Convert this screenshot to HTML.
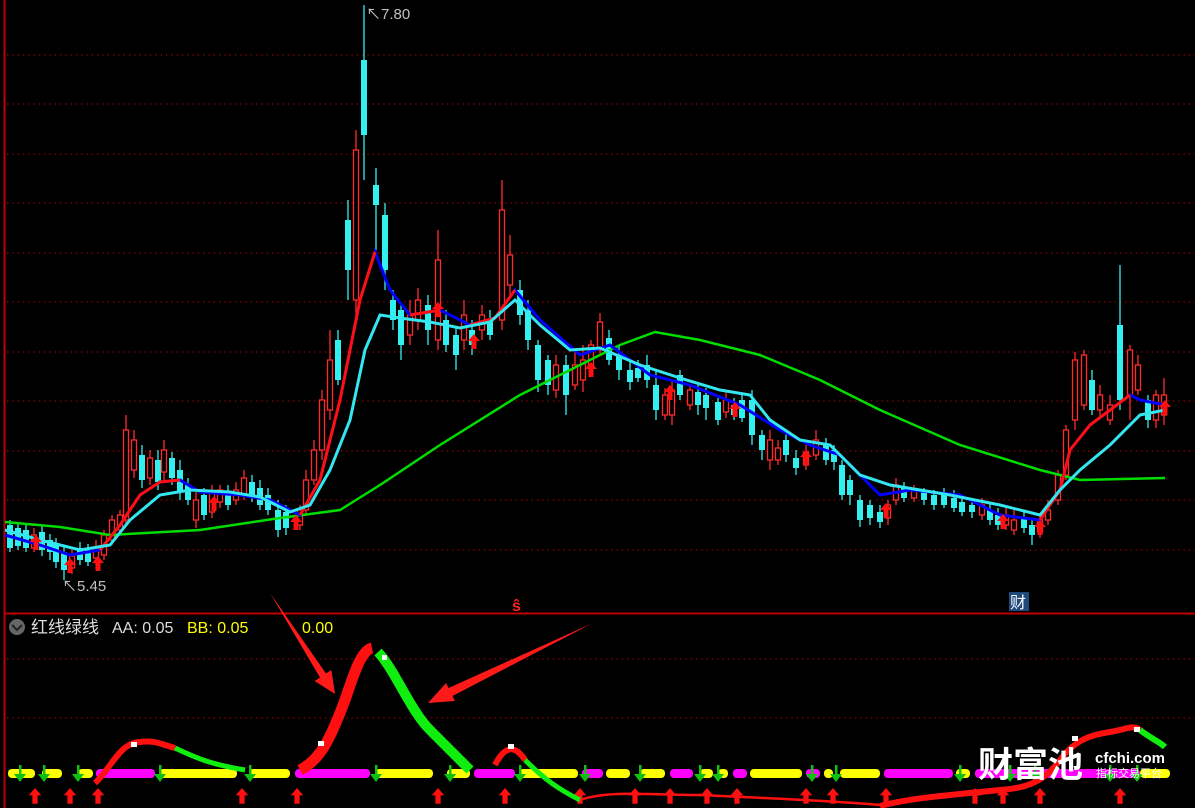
<!DOCTYPE html>
<html><head><meta charset="utf-8"><style>
html,body{margin:0;padding:0;background:#000;width:1195px;height:808px;overflow:hidden}
svg{position:absolute;left:0;top:0}
</style></head><body>
<svg id="s" width="1195" height="808" viewBox="0 0 1195 808" xmlns="http://www.w3.org/2000/svg" font-family="Liberation Sans, Noto Sans CJK SC, sans-serif">
<rect width="1195" height="808" fill="#000"/>
<line x1="4.5" y1="0" x2="4.5" y2="808" stroke="#c00000" stroke-width="2"/>
<line x1="4" y1="613.5" x2="1195" y2="613.5" stroke="#c00000" stroke-width="2"/>
<g stroke="#a00000" stroke-width="1.3" stroke-dasharray="1.3 4">
<line x1="7" y1="55" x2="1195" y2="55"/><line x1="7" y1="104" x2="1195" y2="104"/><line x1="7" y1="154" x2="1195" y2="154"/><line x1="7" y1="203" x2="1195" y2="203"/><line x1="7" y1="253" x2="1195" y2="253"/><line x1="7" y1="302" x2="1195" y2="302"/><line x1="7" y1="352" x2="1195" y2="352"/><line x1="7" y1="401" x2="1195" y2="401"/><line x1="7" y1="451" x2="1195" y2="451"/><line x1="7" y1="500" x2="1195" y2="500"/><line x1="7" y1="550" x2="1195" y2="550"/>
<line x1="7" y1="659" x2="1195" y2="659"/><line x1="7" y1="718" x2="1195" y2="718"/>
</g>
<g id="candles"></g>
<polyline fill="none" stroke="#00dd00" stroke-width="2.5" points="5,522 60,527 110,535 200,530 280,518 340,510 380,485 440,445 520,395 580,365 620,345 655,332 700,340 760,355 820,380 880,410 960,445 1040,470 1080,480 1165,478"/>
<polyline fill="none" stroke="#0000ff" stroke-width="3" points="5,535 40,545 70,555 100,550 120,525 140,495 160,482 180,480 200,492 240,495 270,500 300,515 320,480 340,400 360,300 375,252 390,290 410,315 440,310 470,325 495,318 515,290 540,320 580,355 610,345 650,375 690,385 740,405 780,430 810,445 840,455 880,495 910,490 960,495 1000,515 1040,520 1060,490 1070,450 1090,425 1130,395 1140,400 1165,405"/>
<polyline fill="none" stroke="#ff1010" stroke-width="3" points="100,550 120,525 140,495 160,482 180,480"/>
<polyline fill="none" stroke="#ff1010" stroke-width="3" points="300,515 320,480 340,400 360,300 375,252"/>
<polyline fill="none" stroke="#ff1010" stroke-width="3" points="410,315 440,310"/>
<polyline fill="none" stroke="#ff1010" stroke-width="3" points="470,325 495,318 515,290"/>
<polyline fill="none" stroke="#ff1010" stroke-width="3" points="1040,520 1060,490 1070,450 1090,425 1130,395"/>
<polyline fill="none" stroke="#33e6f0" stroke-width="3" points="5,530 40,540 80,550 110,545 130,520 160,495 190,490 230,492 260,497 290,512 310,505 330,470 350,420 365,350 380,315 400,318 430,322 460,328 490,322 515,300 540,325 570,350 600,348 640,365 680,378 720,390 750,395 770,420 800,440 830,445 860,475 890,485 950,495 1000,505 1040,515 1060,490 1080,470 1110,445 1140,415 1165,410"/>
<g id="uparr"></g>
<text x="366" y="19" fill="#c0c0c0" font-size="15">↖7.80</text>
<text x="62" y="591" fill="#c0c0c0" font-size="15">↖5.45</text>
<text x="512" y="611" fill="#ff2020" font-size="16" font-weight="bold">ŝ</text>
<rect x="1009" y="592" width="20" height="19" fill="#1d4a7a"/>
<text x="1010" y="608" fill="#fff" font-size="16">财</text>
<circle cx="17" cy="627" r="8" fill="#666"/><path d="M12 625 L17 630 L22 625" stroke="#222" stroke-width="2" fill="none"/>
<text x="31" y="633" fill="#ddd" font-size="17">红线绿线</text>
<text x="112" y="633" fill="#ddd" font-size="16">AA: 0.05</text>
<text x="187" y="633" fill="#ffff00" font-size="16">BB: 0.05</text>
<text x="302" y="633" fill="#ffff00" font-size="16">0.00</text>
<g id="bars"></g>
<path d="M95,783 C110,770 120,742 140,742 C155,740 160,744 175,748" stroke="#ff1010" stroke-width="6" fill="none"/>
<path d="M175,748 C200,760 215,765 245,770" stroke="#10ee10" stroke-width="5" fill="none"/>
<path d="M300,770 C320,760 330,740 345,700 C355,670 362,650 372,648" stroke="#ff1010" stroke-width="11" fill="none"/>
<path d="M378,652 C395,670 410,710 430,730 C445,745 455,755 470,770" stroke="#10ee10" stroke-width="10" fill="none"/>
<path d="M495,765 C505,745 515,745 525,760" stroke="#ff1010" stroke-width="6" fill="none"/>
<path d="M525,760 C545,780 560,790 580,800" stroke="#10ee10" stroke-width="5" fill="none"/>
<path d="M580,800 C610,790 650,795 700,795 C760,798 820,800 880,805" stroke="#ff1010" stroke-width="2.5" fill="none"/>
<path d="M880,806 C910,798 950,795 1000,790 C1030,788 1045,780 1060,760 C1075,740 1090,735 1110,732 C1125,730 1132,724 1140,730" stroke="#ff1010" stroke-width="6" fill="none"/>
<path d="M1140,730 C1150,738 1160,742 1165,747" stroke="#10ee10" stroke-width="6" fill="none"/>
<g fill="#fff"><rect x="131" y="742" width="6" height="5"/><rect x="318" y="741" width="6" height="5"/><rect x="508" y="744" width="6" height="5"/><rect x="1072" y="736" width="6" height="5"/><rect x="1134" y="727" width="6" height="5"/><rect x="382" y="655" width="5" height="5"/></g>
<polygon points="270,593 326,673.5 331.4,670 335,694 314.6,681 320,677.5" fill="#ff1a1a"/>
<polygon points="593,623 452.5,696 454.9,701 428,703 446.1,683 448.5,688" fill="#ff1a1a"/>
<text x="978" y="777" fill="#fff" font-size="35" font-weight="bold">财富池</text>
<text x="1095" y="763" fill="#fff" font-size="15" font-weight="bold">cfchi.com</text>
<text x="1096" y="777" fill="#fff" font-size="11">指标交易平台</text>
</svg>
<script>
var ns="http://www.w3.org/2000/svg";
function el(p,t,a){var e=document.createElementNS(ns,t);for(var k in a)e.setAttribute(k,a[k]);p.appendChild(e);return e;}
var C=document.getElementById('candles');
var d=[[10,525,548,520,552,'c'],[18,528,546,522,550,'c'],[26,530,548,524,552,'c'],[34,535,548,528,552,'r'],[42,532,550,526,556,'c'],[50,540,552,534,560,'c'],[56,545,562,538,568,'c'],[64,552,570,545,580,'c'],[72,556,568,550,574,'r'],[80,548,560,542,565,'c'],[88,550,562,544,566,'c'],[96,548,558,540,562,'r'],[104,535,555,530,560,'r'],[112,520,540,515,545,'r'],[120,515,530,510,535,'r'],[126,430,520,415,525,'r'],[134,440,470,430,478,'r'],[142,455,480,445,488,'c'],[150,458,478,450,485,'r'],[158,460,482,450,490,'c'],[164,450,472,440,480,'r'],[172,458,478,452,485,'c'],[180,470,492,460,500,'c'],[188,485,500,478,505,'c'],[196,500,520,492,528,'r'],[204,495,515,488,520,'c'],[212,492,512,485,518,'r'],[220,490,502,485,508,'r'],[228,492,505,485,510,'c'],[236,490,500,482,505,'r'],[244,478,495,470,500,'r'],[252,482,497,475,502,'c'],[260,488,505,480,510,'c'],[268,495,510,488,515,'c'],[278,510,530,500,537,'c'],[286,512,528,505,535,'c'],[300,510,525,505,530,'r'],[306,480,510,470,515,'r'],[314,450,480,440,485,'r'],[322,400,450,390,460,'r'],[330,360,410,330,420,'r'],[338,340,380,330,385,'c'],[348,220,270,200,300,'c'],[356,150,300,130,320,'r'],[364,60,135,5,180,'c'],[376,185,205,168,250,'c'],[385,215,270,203,290,'c'],[393,300,320,290,330,'c'],[401,310,345,305,360,'c'],[410,315,335,300,345,'r'],[418,300,320,288,330,'r'],[428,305,330,295,345,'c'],[438,260,340,230,350,'r'],[446,320,345,310,352,'c'],[456,335,355,328,370,'c'],[464,315,340,300,350,'r'],[472,330,345,320,355,'c'],[482,315,330,305,340,'r'],[490,320,335,310,340,'c'],[502,210,320,180,330,'r'],[510,255,285,235,295,'r'],[520,290,315,280,325,'c'],[528,310,340,300,350,'c'],[538,345,380,340,392,'c'],[548,360,385,355,395,'c'],[556,365,390,355,398,'r'],[566,365,395,355,415,'c'],[575,365,385,350,390,'r'],[583,360,380,345,392,'r'],[591,345,368,340,372,'r'],[600,322,350,313,355,'r'],[609,338,360,330,365,'c'],[619,355,370,345,380,'c'],[630,370,382,360,390,'c'],[638,368,378,360,382,'c'],[647,365,380,355,388,'c'],[656,385,410,370,420,'c'],[665,395,415,388,420,'r'],[672,390,415,380,425,'r'],[680,375,395,370,400,'c'],[690,390,405,385,410,'r'],[698,392,405,385,415,'c'],[706,395,408,388,420,'c'],[718,402,420,398,425,'c'],[726,400,412,390,418,'r'],[734,405,415,398,420,'c'],[742,400,418,393,422,'c'],[752,400,435,390,445,'c'],[762,435,450,430,460,'c'],[770,440,460,430,470,'r'],[778,448,460,440,465,'r'],[786,440,455,432,462,'c'],[796,458,468,450,475,'c'],[806,452,465,445,470,'r'],[816,440,455,430,460,'r'],[826,445,460,438,465,'c'],[834,450,462,445,470,'c'],[842,465,495,460,500,'c'],[850,480,495,475,505,'c'],[860,500,520,495,527,'c'],[870,505,518,500,525,'c'],[880,512,522,505,528,'c'],[888,505,518,500,525,'r'],[896,485,500,478,505,'r'],[904,488,498,482,502,'c'],[914,490,498,485,502,'r'],[924,492,500,488,505,'c'],[934,495,505,490,510,'c'],[944,495,505,488,508,'c'],[954,498,508,490,512,'c'],[962,502,512,495,516,'c'],[972,505,512,500,518,'c'],[982,505,515,498,520,'r'],[990,510,520,503,525,'c'],[998,515,525,508,530,'c'],[1006,515,525,508,530,'r'],[1014,520,530,510,535,'r'],[1024,518,528,510,533,'c'],[1032,525,535,518,545,'c'],[1040,520,532,515,538,'r'],[1048,510,520,500,525,'r'],[1058,475,500,470,505,'r'],[1066,430,475,425,480,'r'],[1075,360,420,352,430,'r'],[1084,355,405,350,410,'r'],[1092,380,410,370,415,'c'],[1100,395,410,385,418,'r'],[1110,405,420,395,425,'r'],[1120,325,400,265,410,'c'],[1130,350,395,345,420,'r'],[1138,365,390,355,395,'r'],[1148,400,420,395,428,'c'],[1156,395,420,390,428,'r'],[1164,395,415,378,425,'r']];
d.forEach(function(c){var x=c[0],col=c[5]=='r'?'#ff2a2a':'#33f0f0';
el(C,'line',{x1:x,x2:x,y1:c[3],y2:c[4],stroke:col,'stroke-width':1.3});
if(c[5]=='r')el(C,'rect',{x:x-2.5,y:c[1],width:5,height:c[2]-c[1],fill:'#000',stroke:col,'stroke-width':1.3});
else el(C,'rect',{x:x-3,y:c[1],width:6,height:c[2]-c[1],fill:col});});
var U=document.getElementById('uparr');
function arrow(p,x,y,s){el(p,'path',{d:'M'+x+','+y+' l'+(-6*s)+','+(7*s)+' h'+(3.5*s)+' v'+(8*s)+' h'+(5*s)+' v'+(-8*s)+' h'+(3.5*s)+' z',fill:'#ff1010'});}
[[36,535],[70,558],[98,556],[214,496],[296,515],[438,302],[474,334],[591,362],[670,385],[735,402],[806,450],[886,503],[1003,514],[1040,520],[1165,400]].forEach(function(a){arrow(U,a[0],a[1],1)});
var B=document.getElementById('bars');
[[8,35,'#ffff00'],[42,62,'#ffff00'],[78,93,'#ffff00'],[96,155,'#ff00ff'],[159,237,'#ffff00'],[249,290,'#ffff00'],[295,370,'#ff00ff'],[375,433,'#ffff00'],[447,470,'#ffff00'],[474,515,'#ff00ff'],[519,578,'#ffff00'],[582,603,'#ff00ff'],[606,630,'#ffff00'],[640,665,'#ffff00'],[670,693,'#ff00ff'],[700,713,'#ffff00'],[718,728,'#ffff00'],[733,747,'#ff00ff'],[750,802,'#ffff00'],[806,820,'#ff00ff'],[824,833,'#ffff00'],[840,880,'#ffff00'],[884,953,'#ff00ff'],[956,970,'#ffff00'],[975,1140,'#ff00ff'],[1140,1170,'#ffff00']].forEach(function(b){el(B,'rect',{x:b[0],y:769,width:b[1]-b[0],height:9,rx:4,fill:b[2]});});
[20,44,78,160,250,376,450,520,585,640,700,718,812,836,960,1010,1035,1110,1137].forEach(function(x){el(B,'path',{d:'M'+(x-6)+',774 h12 l-6,8 z M'+(x-1)+',765 h2.5 v9 h-2.5z',fill:'#10c010'});});
[35,70,98,242,297,438,505,580,635,670,707,737,806,833,886,975,1003,1040,1120].forEach(function(x){arrow(B,x,788,1.05)});
</script>
</body></html>
